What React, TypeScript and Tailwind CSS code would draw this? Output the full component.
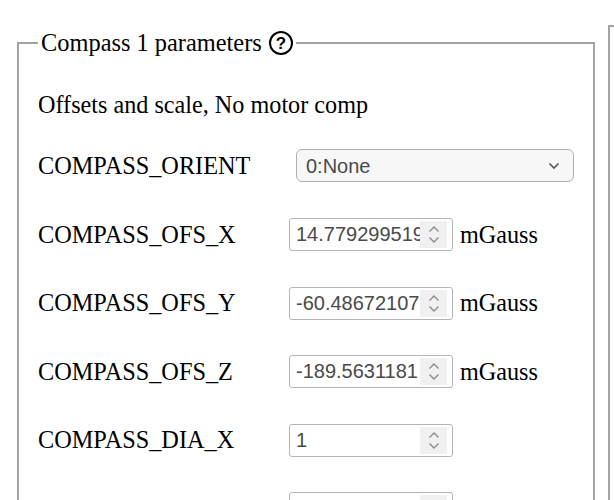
import React from "react";

const serif = { fontFamily: '"Liberation Serif", "Times New Roman", serif' };
const sans = { fontFamily: '"Liberation Sans", Arial, sans-serif' };

type Row = { name: string; value?: string; units?: string; select?: string };

const rows: Row[] = [
  { name: "COMPASS_ORIENT", select: "0:None" },
  { name: "COMPASS_OFS_X", value: "14.779299519", units: "mGauss" },
  { name: "COMPASS_OFS_Y", value: "-60.48672107", units: "mGauss" },
  { name: "COMPASS_OFS_Z", value: "-189.5631181", units: "mGauss" },
  { name: "COMPASS_DIA_X", value: "1" },
  { name: "COMPASS_DIA_Y", value: "1" },
];

function Spinner() {
  return (
    <div className="flex h-full w-[27px] shrink-0 flex-col items-center justify-center gap-[3px] bg-[#f0f0f0]">
      <svg width="12" height="8" viewBox="0 0 12 8" fill="none" stroke="#8a8a8a" strokeWidth="1.4">
        <path d="M1.5 6.5 L6 2 L10.5 6.5" />
      </svg>
      <svg width="12" height="8" viewBox="0 0 12 8" fill="none" stroke="#8a8a8a" strokeWidth="1.4">
        <path d="M1.5 1.5 L6 6 L10.5 1.5" />
      </svg>
    </div>
  );
}

function NumberBox({ value }: { value: string }) {
  return (
    <div
      className="flex h-[33px] w-[164px] items-stretch rounded-[3px] border-[1.5px] border-[#b4b4b4] bg-white py-[2px] pr-[5px]"
      style={sans}
    >
      <div className="flex-1 overflow-hidden whitespace-nowrap pl-[6px] text-[20px] leading-[27px] text-[#4a4a4a]">
        {value}
      </div>
      <Spinner />
    </div>
  );
}

function SelectBox({ value }: { value: string }) {
  return (
    <div
      className="ml-[7px] flex h-[33px] w-[278px] items-center justify-between rounded-[6px] border-[1.5px] border-[#b0b0b0] bg-[#f7f7f7] pl-[9px] pr-[13px] text-[20px] text-[#4a4a4a]"
      style={sans}
    >
      <span>{value}</span>
      <svg width="12" height="8" viewBox="0 0 12 8" fill="none" stroke="#555" strokeWidth="1.6">
        <path d="M1.5 1.5 L6 6 L10.5 1.5" />
      </svg>
    </div>
  );
}

export default function App() {
  return (
    <div className="flex h-[500px] w-[614px] items-start gap-[13px] overflow-hidden bg-white pl-[17px] pt-[25px] text-black" style={serif}>
      <fieldset className="mt-[4px] w-[577px] shrink-0 border-2 border-[#a3a3a3] px-[19px]">
        <legend className="flex items-center px-[3px] text-[24.4px] leading-[28px]">
          Compass 1 parameters
          <span
            className="ml-[7px] flex h-[24px] w-[24px] items-center justify-center rounded-full border-2 border-black text-[17px] font-bold leading-none"
            style={sans}
          >
            ?
          </span>
        </legend>
        <p className="mt-[34px] mb-[12.7px] text-[24.2px] leading-[28px]">Offsets and scale, No motor comp</p>
        <div className="flex flex-col">
          {rows.map((r) => (
            <div key={r.name} className="flex h-[68.6px] shrink-0 items-center">
              <div className="w-[251px] shrink-0 text-[24.3px] leading-[28px]">{r.name}</div>
              {r.select ? (
                <SelectBox value={r.select} />
              ) : (
                <div className="flex items-center">
                  <NumberBox value={r.value ?? ""} />
                  {r.units && <span className="ml-[7px] text-[24.2px] leading-[28px]">{r.units}</span>}
                </div>
              )}
            </div>
          ))}
        </div>
      </fieldset>
      <fieldset className="h-[600px] w-[300px] shrink-0 border-2 border-[#a3a3a3]" />
    </div>
  );
}
